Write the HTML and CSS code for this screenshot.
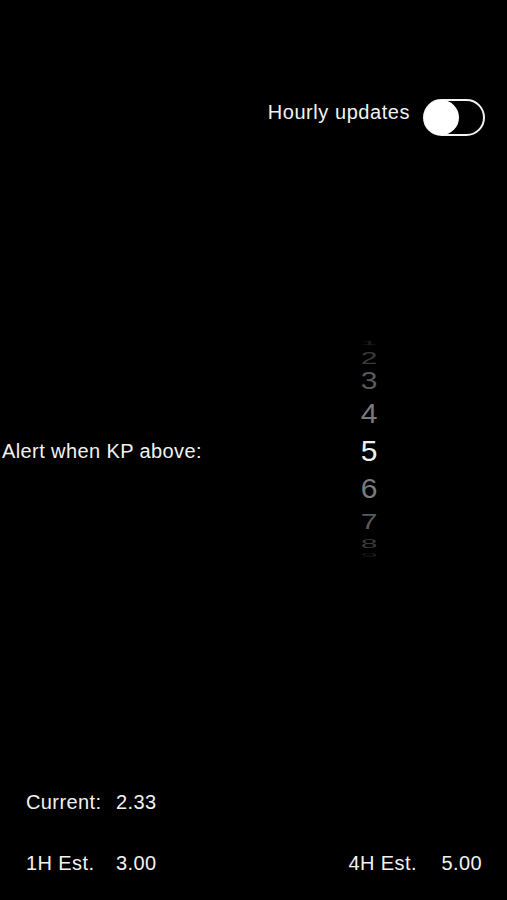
FILE: index.html
```html
<!DOCTYPE html>
<html lang="en">
<head>
<meta charset="utf-8">
<title>KP Alert</title>
<link rel="stylesheet" href="styles.css">
</head>
<body>
<main class="screen">
  <header class="top-bar">
    <span class="top-label">Hourly updates</span>
    <div class="toggle"><div class="knob"></div></div>
  </header>

  <section class="alert">
    <span class="alert-label">Alert when KP above:</span>
    <div class="picker">
      <div class="pick p1"><span>1</span></div>
      <div class="pick p2"><span>2</span></div>
      <div class="pick p3"><span>3</span></div>
      <div class="pick p4"><span>4</span></div>
      <div class="pick p5"><span>5</span></div>
      <div class="pick p6"><span>6</span></div>
      <div class="pick p7"><span>7</span></div>
      <div class="pick p8"><span>8</span></div>
      <div class="pick p9"><span>9</span></div>
    </div>
  </section>

  <footer class="stats">
    <div class="row">
      <div class="stat"><span class="stat-label">Current:</span><span class="stat-value">2.33</span></div>
    </div>
    <div class="row row-split">
      <div class="stat"><span class="stat-label">1H Est.</span><span class="stat-value">3.00</span></div>
      <div class="stat"><span class="stat-label wide">4H Est.</span><span class="stat-value">5.00</span></div>
    </div>
  </footer>
</main>
</body>
</html>
```

FILE: styles.css
```css
html, body {
  margin: 0;
  padding: 0;
  background: #000;
}

.screen {
  width: 507px;
  height: 900px;
  display: flex;
  flex-direction: column;
  color: #f2f2f2;
  font-family: "Liberation Sans", Arial, sans-serif;
  font-size: 20px;
  letter-spacing: 0.4px;
  box-sizing: border-box;
}

.top-bar {
  display: flex;
  justify-content: flex-end;
  align-items: center;
  gap: 13px;
  padding: 99px 22px 0 0;
}

.top-label {
  line-height: 24px;
  margin-top: -12px;
  letter-spacing: 0.55px;
}

.toggle {
  width: 62px;
  height: 37px;
  box-sizing: border-box;
  border: 2px solid #f2f2f2;
  border-radius: 19px;
  display: flex;
  align-items: center;
}

.knob {
  width: 35px;
  height: 35px;
  border-radius: 50%;
  background: #fff;
  margin-left: -1px;
}

.alert {
  display: flex;
  align-items: center;
  margin-top: 201px;
}

.alert-label {
  padding-left: 2px;
  line-height: 24px;
  margin-top: 6px;
}

.picker {
  margin-left: auto;
  margin-right: 118px;
  width: 40px;
  display: flex;
  flex-direction: column;
  letter-spacing: 0;
}

.pick {
  display: flex;
  align-items: center;
  justify-content: center;
  overflow: hidden;
  font-size: 30px;
  line-height: 1;
}

.pick span { display: block; }

.p1 { height: 12px; color: #1e1e1e; }
.p1 span { transform: scaleY(0.2); }
.p2 { height: 18px; color: #3a3a3a; }
.p2 span { transform: scaleY(0.55); }
.p3 { height: 28px; color: #5a5a5a; }
.p3 span { transform: scaleY(0.78); }
.p4 { height: 36px; color: #7a7a7a; }
.p4 span { transform: scaleY(0.95); }
.p5 { height: 40px; color: #f0f0f0; }
.p6 { height: 36px; color: #7a7a7a; }
.p6 span { transform: scaleY(0.92); }
.p7 { height: 28px; color: #5a5a5a; }
.p7 span { transform: scaleY(0.75); }
.p8 { height: 16px; color: #3a3a3a; }
.p8 span { transform: scaleY(0.45); }
.p9 { height: 8px; color: #1a1a1a; }
.p9 span { transform: scaleY(0.15); }

.stats {
  margin-top: auto;
  padding: 0 25px 25px 26px;
  display: flex;
  flex-direction: column;
  gap: 37px;
}

.row {
  display: flex;
  line-height: 24px;
}

.row-split {
  justify-content: space-between;
}

.stat {
  display: flex;
}

.stat-label {
  width: 90px;
}

.stat-label.wide {
  width: 93px;
}
```
